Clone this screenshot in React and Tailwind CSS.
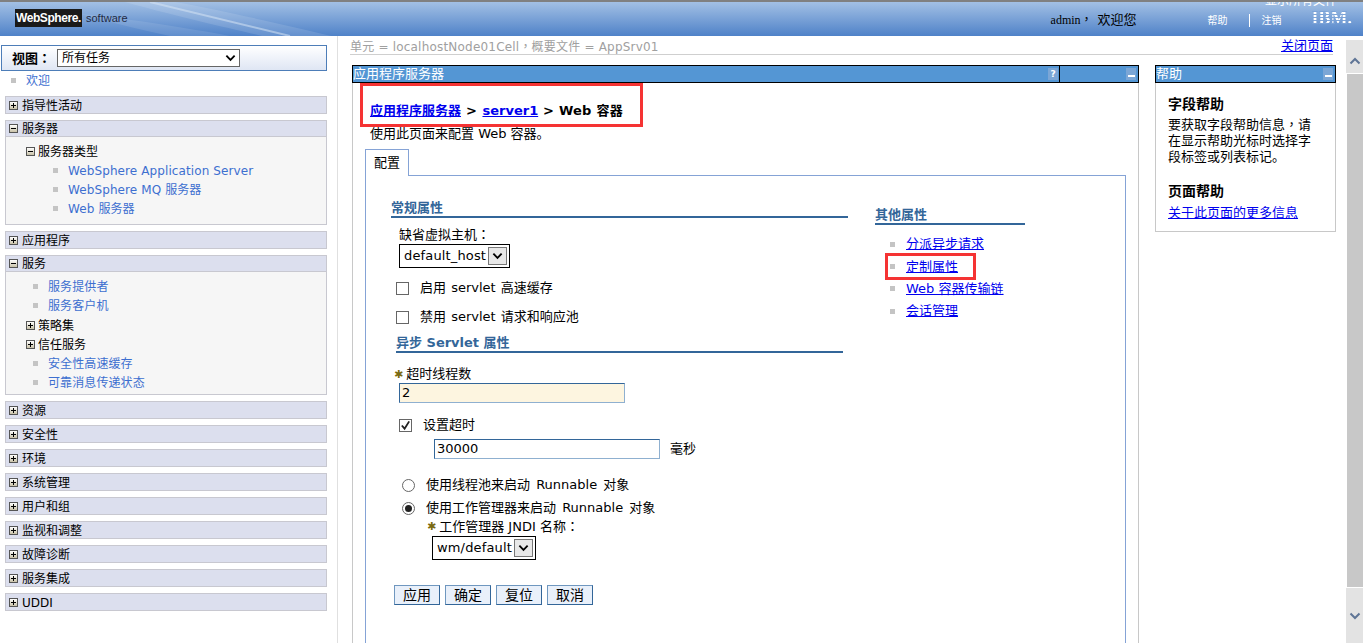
import React from "react";

const Box = ({ open }) => (
  <span className="relative inline-block w-[9px] h-[9px] shrink-0 border border-[#555] bg-gradient-to-b from-[#ffffff] to-[#c9c2a8]">
    <span className="absolute left-[1px] top-[3px] w-[5px] h-px bg-black" />
    {!open && <span className="absolute left-[3px] top-[1px] w-px h-[5px] bg-black" />}
  </span>
);

const Bullet = () => <span className="block w-[5px] h-[5px] bg-[#c4c4c4] shrink-0" />;

const P = ({ c }) => <span className="font-['Noto_Sans_CJK_TC',sans-serif]">{c}</span>;

const NavLink = ({ left, text }) => (
  <div className="flex items-center h-[19px]" style={{ paddingLeft: left }}>
    <Bullet />
    <span className="ml-[10px] text-[#3d6fd0] text-[12px] tracking-[0.1px] whitespace-nowrap">{text}</span>
  </div>
);

const Section = ({ title, open, children }) => (
  <div className="ml-[5px] mb-[6px] border border-[#c8c8d0]">
    <div className={`h-[16px] bg-[#dcdfee] flex items-center pl-[3px] gap-[4px] text-[12px] text-black ${open ? "border-b border-[#c8c8d0]" : ""}`}>
      <Box open={open} />
      <span className="whitespace-nowrap pt-px">{title}</span>
    </div>
    {children}
  </div>
);

const Tree = ({ title, open }) => (
  <div className="flex items-center gap-[3px] h-[19px] pl-[20px] text-[12px] text-black">
    <Box open={open} />
    <span>{title}</span>
  </div>
);

const Chevron = ({ cls }) => (
  <svg viewBox="0 0 12 8" className={cls} fill="none" stroke="currentColor" strokeWidth="2">
    <path d="M1.5 1.5 L6 6 L10.5 1.5" />
  </svg>
);

const MiniBtn = ({ label }) => (
  <span className="w-[10px] h-[12px] bg-[#7ba6d6] flex items-center justify-center text-[9px] font-bold text-white leading-none">
    {label ?? <span className="block w-[7px] h-[2px] bg-white mt-[4px]" />}
  </span>
);

const Select = ({ text, w }) => (
  <div className="flex items-center border border-black h-[24px] pl-[4px] pr-[2px] text-[13px] tracking-[0.15px] bg-white justify-between" style={{ width: w }}>
    <span className="whitespace-nowrap">{text}</span>
    <span className="w-[19px] h-[18px] border border-[#777] bg-[#e8e8e8] flex items-center justify-center text-black">
      <Chevron cls="w-[11px] h-[8px]" />
    </span>
  </div>
);

const Heading = ({ children, w }) => (
  <div className="border-b-[2px] border-[#336699] text-[#336699] font-bold text-[13px] leading-[13px] h-[17px] whitespace-nowrap" style={{ width: w }}>
    {children}
  </div>
);

const Check = ({ on }) => (
  <span className="w-[13px] h-[13px] border border-[#666] bg-white shrink-0 flex items-center justify-center">
    {on && (
      <svg viewBox="0 0 12 12" className="w-[11px] h-[11px]" fill="none" stroke="#222" strokeWidth="2">
        <path d="M2 6 L5 9.5 L10 1.5" />
      </svg>
    )}
  </span>
);

const Radio = ({ on }) => (
  <span className="w-[13px] h-[13px] rounded-full border border-[#666] bg-white shrink-0 flex items-center justify-center">
    {on && <span className="w-[7px] h-[7px] rounded-full bg-[#222]" />}
  </span>
);

const Star = () => <span className="text-[#7a6a10] text-[11px] leading-none">✱</span>;

const Btn = ({ children }) => (
  <span className="w-[46px] h-[20px] border border-[#6f97bf] border-b-[#336699] border-r-[#336699] bg-[#e9f0fa] flex items-center justify-center text-[14px]">
    {children}
  </span>
);

const Side = ({ text, red }) => (
  <div className="relative flex items-center h-[22.33px] pl-[15px]">
    <Bullet />
    <span className="ml-[11px] text-[13px] text-[#0000ee] underline whitespace-nowrap">{text}</span>
    {red && <span className="absolute left-[10px] top-[-2px] w-[91px] h-[27px] border-[3px] border-[#f53333]" />}
  </div>
);

export default function App() {
  return (
    <div className="relative w-[1363px] h-[643px] overflow-hidden bg-white text-black font-['DejaVu_Sans','Noto_Sans_CJK_SC',sans-serif] text-[12px] flex flex-col">
      {/* Header */}
      <header className="relative h-[36px] shrink-0 border-t-[2px] border-[#808080] bg-gradient-to-b from-[#a3c0e4] to-[#4f82c8] overflow-hidden flex items-center">
        <svg className="absolute inset-0 w-[1363px] h-[36px]" viewBox="0 0 1363 36" fill="none">
          <path d="M150 0 C200 12 250 24 290 34" stroke="#cfe0f3" strokeOpacity="0.55" strokeWidth="2" />
          <path d="M125 0 C190 18 230 26 270 36 L340 36 C290 24 220 8 175 0Z" fill="#ffffff" fillOpacity="0.12" />
          <path d="M80 12 C140 18 200 28 240 36 L180 36 C140 28 110 20 80 12Z" fill="#ffffff" fillOpacity="0.1" />
        </svg>
        <div className="relative ml-[15px] mt-[-2px] w-[67px] h-[18px] bg-[#1a1a1a] flex items-center justify-center font-['Liberation_Sans',sans-serif] text-white font-bold text-[12px] tracking-[-0.4px]">
          WebSphere.
        </div>
        <span className="relative ml-[4px] mt-[-2px] font-['Liberation_Sans',sans-serif] text-[#1f2a44] text-[11px]">software</span>
        <span className="relative ml-[923px] mt-[1px] w-[47px] font-['Liberation_Serif',serif] text-[12px] text-black whitespace-nowrap">admin<P c="，" /></span>
        <span className="relative mt-[1px] text-[13px] text-black whitespace-nowrap">欢迎您</span>
        <span className="relative ml-[71px] mt-[3px] text-[10px] text-white whitespace-nowrap">帮助</span>
        <span className="relative ml-[21px] mt-[3px] w-px h-[13px] bg-white" />
        <span className="relative ml-[12px] mt-[3px] text-[10px] text-white whitespace-nowrap">注销</span>
        <span className="relative ml-[30px] mt-[-3px] font-['Liberation_Serif',serif] font-bold text-[18px] leading-none text-transparent bg-clip-text bg-[repeating-linear-gradient(to_bottom,#ffffff_0px,#ffffff_2px,#7ba3d8_2px,#7ba3d8_3px)]">IBM.</span>
        <span className="absolute left-[1265px] top-[-10px] text-[12px] text-white whitespace-nowrap">显示所有文件</span>
      </header>

      <div className="flex flex-1 min-h-0">
        {/* Sidebar */}
        <aside className="w-[338px] shrink-0 border-r border-[#e0e0e0] pt-[9px] pr-[10px]">
          <div className="ml-[1px] h-[26px] border border-[#4d7db8] bg-gradient-to-b from-white to-[#dfe6f4] flex items-center pl-[10px]">
            <span className="font-bold text-[13px] w-[45px] whitespace-nowrap">视图<P c="：" /></span>
            <div className="w-[183px] h-[18px] border border-[#666] bg-white flex items-center justify-between pl-[4px] pr-[3px] text-[12px]">
              <span>所有任务</span>
              <Chevron cls="w-[11px] h-[8px] text-black" />
            </div>
          </div>
          <div className="flex items-center h-[19px] mb-[6px] pl-[11px]">
            <Bullet />
            <span className="ml-[10px] text-[#3d6fd0] text-[12px]">欢迎</span>
          </div>
          <Section title="指导性活动" />
          <Section title="服务器" open>
            <div className="bg-[#f6f6f6] h-[87px] pt-[5px]">
              <Tree title="服务器类型" open />
              <NavLink left={47} text="WebSphere Application Server" />
              <NavLink left={47} text="WebSphere MQ 服务器" />
              <NavLink left={47} text="Web 服务器" />
            </div>
          </Section>
          <Section title="应用程序" />
          <Section title="服务" open>
            <div className="bg-[#f6f6f6] pt-[5px] pb-[2px]">
              <NavLink left={27} text="服务提供者" />
              <NavLink left={27} text="服务客户机" />
              <div className="mt-px"><Tree title="策略集" /></div>
              <Tree title="信任服务" />
              <NavLink left={27} text="安全性高速缓存" />
              <NavLink left={27} text="可靠消息传递状态" />
            </div>
          </Section>
          {["资源", "安全性", "环境", "系统管理", "用户和组", "监视和调整", "故障诊断", "服务集成", "UDDI"].map((t) => (
            <Section key={t} title={t} />
          ))}
        </aside>

        {/* Main */}
        <main className="w-[1008px] shrink-0 pt-[2px] pl-[12px] min-w-0">
          <div className="w-[983px] h-[17px] border-b border-[#cfcfcf] flex justify-between items-center text-[12px]">
            <span className="text-[#a0a0a0] whitespace-nowrap tracking-[0.2px]">单元 = localhostNode01Cell<P c="，" />概要文件 = AppSrv01</span>
            <span className="text-[#0000ee] underline text-[13px]">关闭页面</span>
          </div>
          <div className="flex mt-[10px] pl-[2px] items-start">
            {/* Panel */}
            <div className="relative w-[787px] h-[600px] border-x border-[#c8c8c8]">
              <div className="relative -mx-px h-[18px] bg-[#5496d4] border border-black flex items-center text-white text-[13px] justify-between">
                <span className="whitespace-nowrap">应用程序服务器</span>
                <div className="flex items-center h-full">
                  <MiniBtn label="?" />
                  <span className="ml-[1px] w-px h-full bg-black" />
                  <span className="ml-[66px] mr-[2px]"><MiniBtn /></span>
                </div>
              </div>
              <div className="pl-[17px] pt-[19px]">
                <div className="text-[13px] font-bold whitespace-nowrap h-[18px] leading-[18px]">
                  <span className="text-[#0000ee] underline">应用程序服务器</span>
                  <span className="tracking-[0.5px]"> &gt; </span>
                  <span className="text-[#0000ee] underline">server1</span>
                  <span className="tracking-[0.25px]"> &gt; Web 容器</span>
                </div>
                <div className="text-[13px] h-[18px] leading-[16px] mt-[6px]">使用此页面来配置 Web 容器。</div>
              </div>
              <span className="absolute left-[7px] top-[18px] w-[283px] h-[44px] border-[3px] border-[#f53333]" />

              <div className="ml-[12px] mt-[5px] flex">
                <div className="w-[44px] h-[27px] border border-b-0 border-[#85a3d6] bg-white flex items-center justify-center text-[13px] relative z-10">配置</div>
              </div>
              <div className="ml-[12px] mt-[-1px] w-[761px] h-[480px] border border-[#85a3d6] flex pl-[25px] pt-[25px]">
                <div className="w-[484px] shrink-0">
                  <Heading w={457}>常规属性</Heading>
                  <div className="ml-[8px] mt-[8px] text-[13px] leading-[16px]">缺省虚拟主机<P c="：" /></div>
                  <div className="ml-[8px] mt-px"><Select text="default_host" w={111} /></div>
                  <div className="ml-[5px] mt-[12px] flex items-center gap-[11px] text-[13px] h-[16px] [word-spacing:1px]"><Check /><span>启用 servlet 高速缓存</span></div>
                  <div className="ml-[5px] mt-[13px] flex items-center gap-[11px] text-[13px] h-[16px] [word-spacing:1px]"><Check /><span>禁用 servlet 请求和响应池</span></div>
                  <div className="ml-[5px] mt-[11px]"><Heading w={447}>异步 Servlet 属性</Heading></div>
                  <div className="ml-[3px] mt-[13px] flex items-center gap-[2px] text-[13px] leading-[16px] h-[16px]"><Star /><span className="ml-[1px]">超时线程数</span></div>
                  <div className="ml-[8px] mt-[1px] w-[226px] h-[20px] border border-[#336699] border-b-[#8fb0d0] border-r-[#8fb0d0] bg-[#fdf5e0] pl-[2px] text-[13px] leading-[18px]">2</div>
                  <div className="ml-[8px] mt-[14px] flex items-center gap-[11px] text-[13px] h-[16px]"><Check on /><span>设置超时</span></div>
                  <div className="ml-[43px] mt-[6px] flex items-center">
                    <div className="w-[226px] h-[20px] border border-[#336699] border-b-[#8fb0d0] border-r-[#8fb0d0] pl-[2px] text-[13px] leading-[18px]">30000</div>
                    <span className="ml-[10px] text-[13px]">毫秒</span>
                  </div>
                  <div className="ml-[11px] mt-[18px] flex items-center gap-[11px] text-[13px] h-[16px] [word-spacing:2px]"><Radio /><span>使用线程池来启动 Runnable 对象</span></div>
                  <div className="ml-[11px] mt-[7px] flex items-center gap-[11px] text-[13px] h-[16px] [word-spacing:2px]"><Radio on /><span>使用工作管理器来启动 Runnable 对象</span></div>
                  <div className="ml-[36px] mt-[2px] flex items-center gap-[2px] text-[13px] h-[16px]"><Star /><span className="ml-[1px]">工作管理器 JNDI 名称<P c="：" /></span></div>
                  <div className="ml-[41px] mt-[2px]"><Select text="wm/default" w={104} /></div>
                  <div className="ml-[3px] mt-[25px] flex gap-[5px]">
                    <Btn>应用</Btn><Btn>确定</Btn><Btn>复位</Btn><Btn>取消</Btn>
                  </div>
                </div>
                <div className="w-[150px] pt-[7px]">
                  <Heading w={150}>其他属性</Heading>
                  <div className="mt-[8px]">
                    <Side text="分派异步请求" />
                    <Side text="定制属性" red />
                    <Side text="Web 容器传输链" />
                    <Side text="会话管理" />
                  </div>
                </div>
              </div>
            </div>

            {/* Help */}
            <div className="ml-[16px] w-[181px] h-[167px] border-x border-b border-[#c8c8c8]">
              <div className="-mx-px h-[18px] bg-[#5496d4] border border-black flex items-center justify-between text-white text-[13px]">
                <span>帮助</span>
                <span className="mr-[2px]"><MiniBtn /></span>
              </div>
              <div className="pl-[12px] pr-[20px] pt-[13px] text-[13px] leading-[16px]">
                <div className="font-bold text-[14px] h-[20px]">字段帮助</div>
                <div>要获取字段帮助信息<P c="，" />请在显示帮助光标时选择字段标签或列表标记。</div>
                <div className="font-bold text-[14px] mt-[18px] h-[22px]">页面帮助</div>
                <div className="text-[#0000ee] underline whitespace-nowrap">关于此页面的更多信息</div>
              </div>
            </div>
          </div>
        </main>

        {/* Scrollbar */}
        <div className="w-[17px] shrink-0 flex flex-col mt-[4px]">
          <div className="h-[33px] bg-[#e3e3e3] flex items-center justify-center text-[#5f7596]"><Chevron cls="w-[12px] h-[8px] rotate-180 mt-[9px]" /></div>
          <div className="ml-px flex-1 mt-px mb-px bg-[#c8c8c8]" />
          <div className="h-[55px] bg-[#e3e3e3] flex items-center justify-center text-[#5f7596]"><Chevron cls="w-[12px] h-[8px]" /></div>
        </div>
      </div>
    </div>
  );
}
